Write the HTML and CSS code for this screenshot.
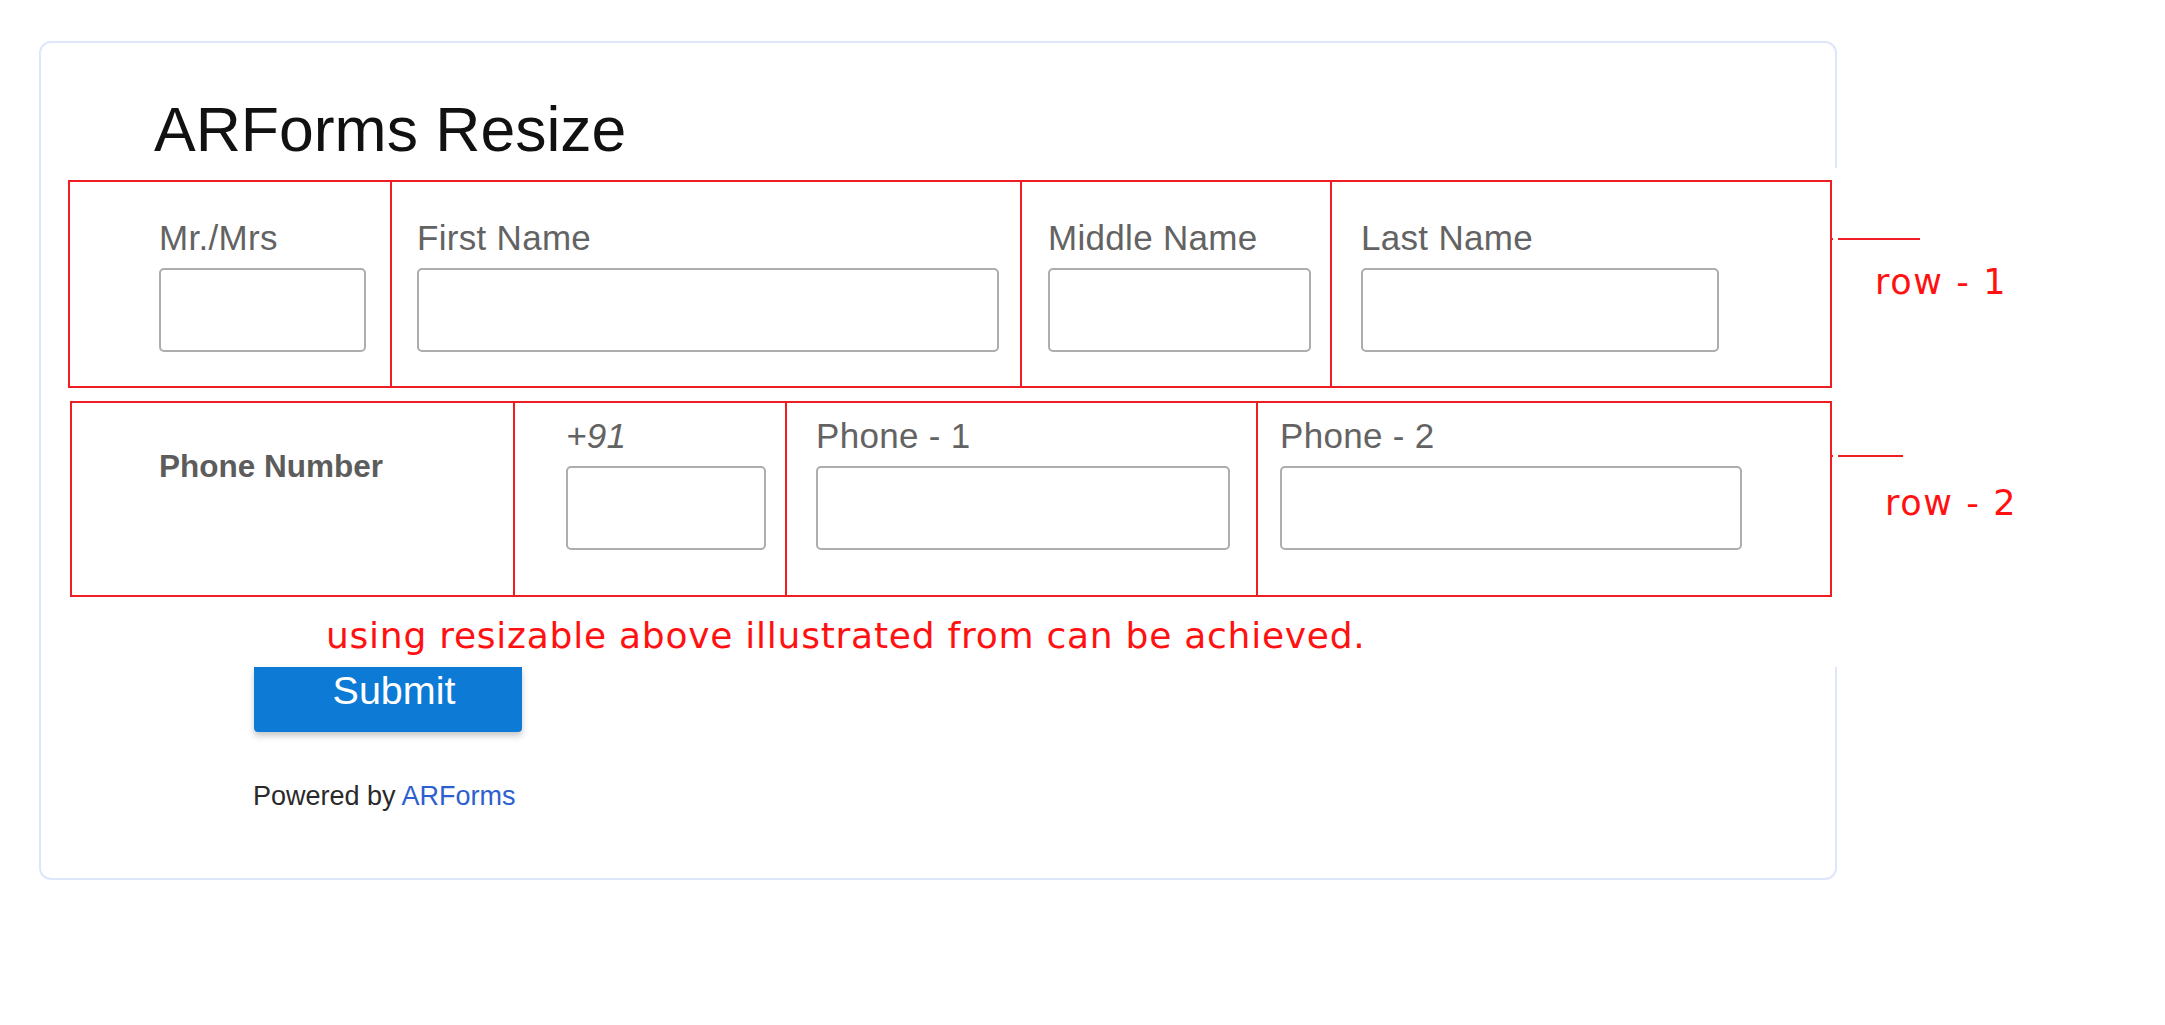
FILE: index.html
```html
<!DOCTYPE html>
<html lang="en">
<head>
<meta charset="utf-8">
<title>ARForms Resize</title>
<link rel="stylesheet" href="styles.css">
</head>
<body>
<div class="card">
  <h1 class="title">ARForms Resize</h1>

  <div class="row row1">
    <div class="cell r1c1">
      <div class="lbl">Mr./Mrs</div>
      <input class="inp r1w1" type="text">
    </div>
    <div class="cell r1c2">
      <div class="lbl">First Name</div>
      <input class="inp r1w2" type="text">
    </div>
    <div class="cell r1c3">
      <div class="lbl">Middle Name</div>
      <input class="inp r1w3" type="text">
    </div>
    <div class="cell r1c4">
      <div class="lbl">Last Name</div>
      <input class="inp r1w4" type="text">
    </div>
    <span class="note-line nl1"></span>
    <span class="note-text nt1">row - 1</span>
  </div>

  <div class="row row2">
    <div class="cell r2c1">
      <div class="lbl-bold">Phone Number</div>
    </div>
    <div class="cell r2c2">
      <div class="lbl italic">+91</div>
      <input class="inp r2w2" type="text">
    </div>
    <div class="cell r2c3">
      <div class="lbl">Phone - 1</div>
      <input class="inp r2w3" type="text">
    </div>
    <div class="cell r2c4">
      <div class="lbl">Phone - 2</div>
      <input class="inp r2w4" type="text">
    </div>
    <span class="note-line nl2"></span>
    <span class="note-text nt2">row - 2</span>
  </div>

  <p class="remark">using resizable above illustrated from can be achieved.</p>

  <button class="submit" type="button">Submit</button>

  <p class="powered">Powered by <a class="brand" href="#">ARForms</a></p>
</div>
</body>
</html>
```

FILE: styles.css
```css
html, body {
  margin: 0;
  padding: 0;
  background: #ffffff;
}

body {
  font-family: "Liberation Sans", Arial, sans-serif;
}

.card {
  position: relative;
  box-sizing: border-box;
  width: 1798px;
  margin: 41px 0 0 39px;
  padding: 51px 0 67px 0;
  border: 2px solid #dde6fa;
  border-radius: 12px;
  background: #ffffff;
}

/* white patch of the annotation canvas that hides part of the right border */
.card::after {
  content: "";
  position: absolute;
  top: 125px;
  right: -3px;
  width: 5px;
  height: 499px;
  background: #ffffff;
}

.title {
  margin: 0 0 0 113px;
  font-size: 62.5px;
  line-height: 70px;
  font-weight: normal;
  color: #111111;
}

.row {
  position: relative;
  display: flex;
  box-sizing: border-box;
  border: 2px solid #f01e23;
}

.row1 {
  margin: 16px 0 0 27px;
  width: 1764px;
}

.row2 {
  margin: 13px 0 0 29px;
  width: 1762px;
}

.cell {
  box-sizing: border-box;
  border-right: 2px solid #f01e23;
  display: flex;
  flex-direction: column;
  align-items: flex-start;
}

.cell:nth-child(4) {
  border-right: none;
  flex: 1;
}

.row1 .cell {
  padding-top: 36px;
  padding-bottom: 34px;
}

.row2 .cell {
  padding-top: 13px;
  padding-bottom: 45px;
}

.r1c1 { width: 322px; padding-left: 89px; }
.r1c2 { width: 630px; padding-left: 25px; }
.r1c3 { width: 310px; padding-left: 26px; }
.r1c4 { padding-left: 29px; }

.r2c1 { width: 443px; padding-left: 87px; }
.row2 .r2c1 { padding-top: 43px; }
.r2c2 { width: 272px; padding-left: 51px; }
.r2c3 { width: 471px; padding-left: 29px; }
.r2c4 { padding-left: 22px; }

.lbl {
  font-size: 35px;
  line-height: 40px;
  letter-spacing: 0.3px;
  color: #636363;
  white-space: nowrap;
}

.italic {
  font-style: italic;
}

.lbl-bold {
  font-size: 31.5px;
  line-height: 40px;
  font-weight: bold;
  color: #5c5c5c;
  white-space: nowrap;
}

.inp {
  box-sizing: border-box;
  display: block;
  height: 84px;
  margin: 10px 0 0 0;
  padding: 0 10px;
  border: 2px solid #adadad;
  border-radius: 5px;
  background: #ffffff;
  font-family: "Liberation Sans", Arial, sans-serif;
  font-size: 30px;
  outline: none;
}

.r1w1 { width: 207px; }
.r1w2 { width: 582px; }
.r1w3 { width: 263px; }
.r1w4 { width: 358px; }

.r2w2 { width: 200px; }
.r2w3 { width: 414px; }
.r2w4 { width: 462px; }

/* annotation marks next to each row */
.note-line {
  position: absolute;
  left: 100%;
  height: 2px;
  background: #f01e23;
}

.nl1 { top: 56px; width: 90px; }
.nl2 { top: 52px; width: 73px; }

.note-text {
  position: absolute;
  font-family: "DejaVu Sans", Verdana, sans-serif;
  font-size: 35px;
  line-height: 40px;
  letter-spacing: 1.6px;
  color: #ff1111;
  white-space: nowrap;
}

.nt1 { top: 80px; left: calc(100% + 45px); }
.nt2 { top: 80px; left: calc(100% + 55px); }

.remark {
  margin: 17px 0 0 285px;
  font-family: "DejaVu Sans", Verdana, sans-serif;
  font-size: 36px;
  line-height: 44px;
  letter-spacing: 0.75px;
  color: #ff1111;
  white-space: nowrap;
}

.submit {
  box-sizing: border-box;
  width: 268px;
  height: 65px;
  margin: 9px 0 0 213px;
  padding: 4px 0 0 12px;
  border: none;
  border-radius: 0 0 4px 4px;
  background: #0d7ad6;
  box-shadow: 0 4px 6px rgba(0, 0, 0, 0.22);
  font-family: "Liberation Sans", Arial, sans-serif;
  font-size: 39.5px;
  line-height: 39px;
  color: #ffffff;
  display: flex;
  justify-content: center;
  align-items: flex-start;
}

.powered {
  margin: 49px 0 0 212px;
  font-size: 27px;
  line-height: 30px;
  color: #2a2a2a;
}

.brand {
  color: #2d5fd0;
  text-decoration: none;
}
```
